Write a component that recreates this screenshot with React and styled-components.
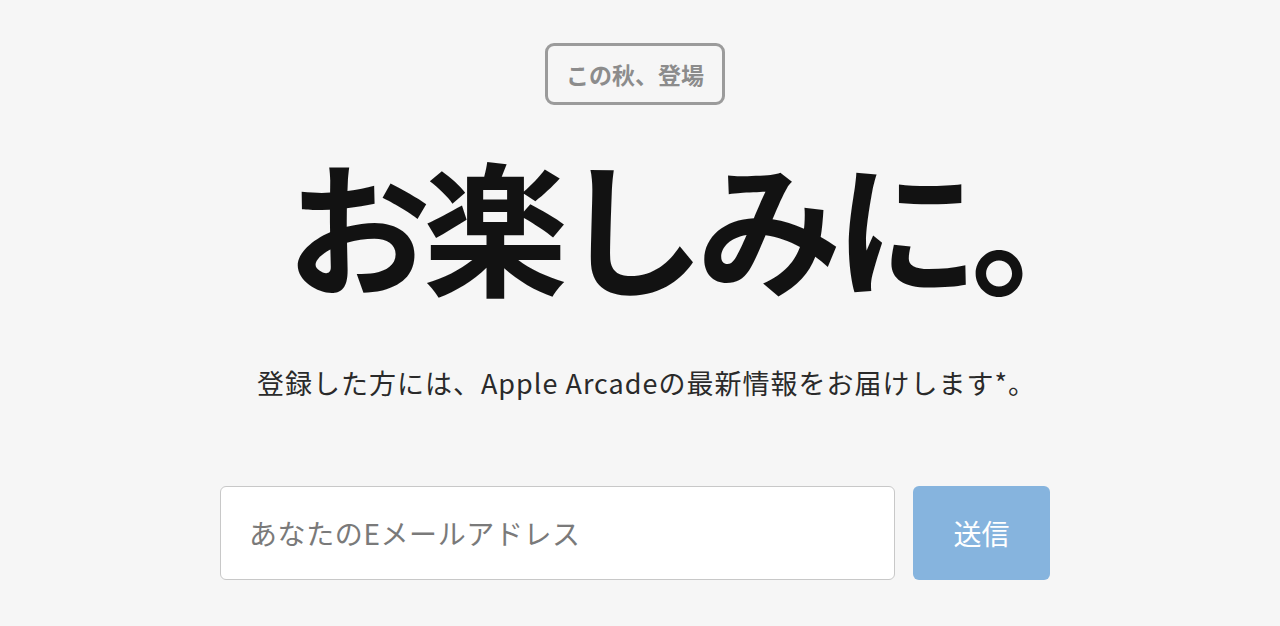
import React from 'react';
import styled, { createGlobalStyle } from 'styled-components';

const GlobalStyle = createGlobalStyle`
  html, body {
    margin: 0;
    padding: 0;
    background: #f6f6f6;
  }
  body {
    font-family: "Noto Sans CJK JP", "Noto Sans", sans-serif;
  }
`;

const Page = styled.main`
  height: 626px;
  display: flex;
  flex-direction: column;
  align-items: center;
  padding: 43px 10px 0 0;
  box-sizing: border-box;
  overflow: hidden;
`;

const Badge = styled.div`
  box-sizing: border-box;
  height: 62px;
  padding: 0 18px;
  display: flex;
  align-items: center;
  border: 3px solid #9b9b9b;
  border-radius: 9px;
  color: #8c8c8c;
  font-size: 23px;
  font-weight: 700;
`;

const Headline = styled.h1`
  margin: 38px 0 0 124px;
  font-size: 145px;
  line-height: 160px;
  font-weight: 700;
  color: #121212;
  letter-spacing: -8px;
  white-space: nowrap;
`;

const Lead = styled.p`
  margin: 62px 0 0 23px;
  font-size: 27px;
  line-height: 36px;
  letter-spacing: 1px;
  color: #2a2a2a;
  white-space: nowrap;
`;

const Form = styled.form`
  margin-top: 85px;
  display: flex;
  gap: 18px;
`;

const EmailInput = styled.input`
  box-sizing: border-box;
  width: 675px;
  height: 94px;
  padding: 0 28px;
  border: 1.5px solid #c8c8c8;
  border-radius: 6px;
  background: #fff;
  font-family: inherit;
  font-size: 28px;
  letter-spacing: 0.6px;
  color: #333;
  outline: none;
  &::placeholder {
    color: #7a7a7a;
  }
`;

const Submit = styled.button`
  box-sizing: border-box;
  width: 137px;
  height: 94px;
  border: none;
  border-radius: 6px;
  background: #86b4de;
  color: #fff;
  font-family: inherit;
  font-size: 28px;
  cursor: pointer;
`;

export default function App() {
  return (
    <>
      <GlobalStyle />
      <Page>
        <Badge>この秋、登場</Badge>
        <Headline>お楽しみに。</Headline>
        <Lead>登録した方には、Apple Arcadeの最新情報をお届けします*。</Lead>
        <Form onSubmit={(e) => e.preventDefault()}>
          <EmailInput type="email" placeholder="あなたのEメールアドレス" />
          <Submit type="submit">送信</Submit>
        </Form>
      </Page>
    </>
  );
}
